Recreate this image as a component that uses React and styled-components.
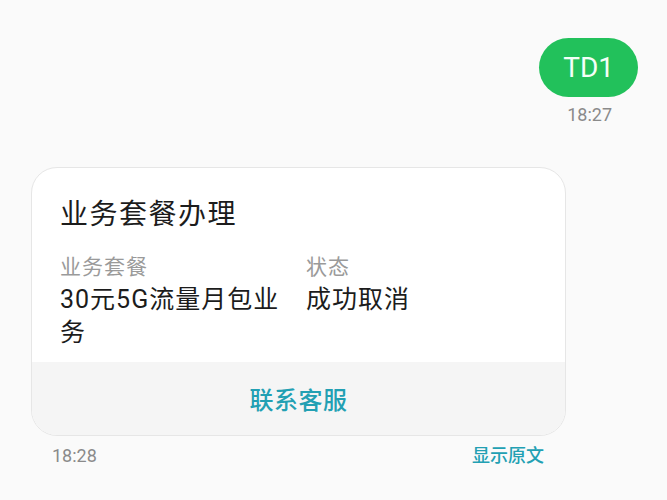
import React from "react";
import styled, { createGlobalStyle } from "styled-components";

const Global = createGlobalStyle`
  html, body { margin: 0; padding: 0; background: #fafafa; }
  body { font-family: Roboto, "Noto Sans CJK SC", sans-serif; }
  * { box-sizing: border-box; }
`;

const Page = styled.div`
  width: 667px;
  height: 500px;
  background: #fafafa;
  padding-top: 38px;
  overflow: hidden;
`;

const Outgoing = styled.div`
  display: flex;
  flex-direction: column;
  align-items: flex-end;
  padding-right: 29px;
`;

const Bubble = styled.div`
  height: 59px;
  line-height: 59px;
  padding: 0 24px;
  border-radius: 30px;
  background: #22c15b;
  color: #f4fff7;
  font-size: 28px;
`;

const Time = styled.div`
  font-size: 18px;
  line-height: 24px;
  color: ${(p) => (p.$link ? "#22a0b3" : "#8a8a8a")};
  font-weight: ${(p) => (p.$link ? 500 : 400)};
`;

const OutTime = styled(Time)`
  margin-top: 6px;
  margin-right: 26px;
`;

const Incoming = styled.div`
  margin-top: 40px;
  margin-left: 31px;
  width: 535px;
`;

const Card = styled.div`
  background: #fff;
  border: 1px solid #e6e6e6;
  border-radius: 26px;
  overflow: hidden;
`;

const Body = styled.div`
  padding: 29px 20px 13px 28px;
`;

const Title = styled.div`
  font-size: 28px;
  line-height: 36px;
  letter-spacing: 1.5px;
  color: #1c1c1c;
`;

const Fields = styled.div`
  display: grid;
  grid-template-columns: 228px 1fr;
  column-gap: 18px;
  margin-top: 19px;
`;

const Field = styled.div`
  display: flex;
  flex-direction: column;
`;

const Label = styled.div`
  font-size: 21px;
  line-height: 30px;
  letter-spacing: 1px;
  color: #9a9a9a;
`;

const Value = styled.div`
  margin-top: 1px;
  font-size: 25px;
  line-height: 33px;
  letter-spacing: 1px;
  color: #1c1c1c;
`;

const Action = styled.div`
  height: 73px;
  background: #f5f5f5;
  display: flex;
  align-items: center;
  justify-content: center;
  font-size: 24px;
  font-weight: 500;
  color: #22a0b3;
  letter-spacing: 0.5px;
`;

const Meta = styled.div`
  display: flex;
  justify-content: space-between;
  padding: 0 22px 0 21px;
  margin-top: 8px;
`;

export default function App() {
  return (
    <>
      <Global />
      <Page>
        <Outgoing>
          <Bubble>TD1</Bubble>
          <OutTime>18:27</OutTime>
        </Outgoing>
        <Incoming>
          <Card>
            <Body>
              <Title>业务套餐办理</Title>
              <Fields>
                <Field>
                  <Label>业务套餐</Label>
                  <Value>30元5G流量月包业务</Value>
                </Field>
                <Field>
                  <Label>状态</Label>
                  <Value>成功取消</Value>
                </Field>
              </Fields>
            </Body>
            <Action>联系客服</Action>
          </Card>
          <Meta>
            <Time>18:28</Time>
            <Time $link>显示原文</Time>
          </Meta>
        </Incoming>
      </Page>
    </>
  );
}
